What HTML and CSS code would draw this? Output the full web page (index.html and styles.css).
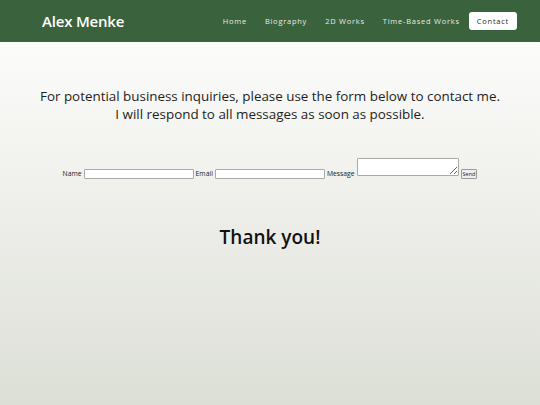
FILE: index.html
```html
<!DOCTYPE html>
<html lang="en">
<head>
<meta charset="utf-8">
<title>Contact - Alex Menke</title>
<link rel="stylesheet" href="styles.css">
</head>
<body>
<header class="site-header">
  <div class="logo">Alex Menke</div>
  <nav class="nav">
    <a class="nav-link" href="#">Home</a>
    <a class="nav-link" href="#">Biography</a>
    <a class="nav-link" href="#">2D Works</a>
    <a class="nav-link" href="#">Time-Based Works</a>
    <a class="nav-link nav-active" href="#">Contact</a>
  </nav>
</header>
<main class="content">
  <p class="intro">For potential business inquiries, please use the form below to contact me.<br>I will respond to all messages as soon as possible.</p>
  <form class="contact-form">
    <label class="lbl">Name</label><input class="field" type="text">
    <label class="lbl">Email</label><input class="field" type="text">
    <label class="lbl">Message</label><textarea class="msg"></textarea>
    <button class="send" type="button">Send</button>
  </form>
  <h1 class="thanks">Thank you!</h1>
</main>
</body>
</html>
```
FILE: styles.css
```css
html, body {
  margin: 0;
  padding: 0;
  height: 100%;
}
body {
  font-family: "Open Sans", "Liberation Sans", sans-serif;
  color: #1c1c1c;
  background: linear-gradient(to bottom, #ffffff 0px, #f3f3f0 150px, #dcdfd6 405px);
  min-height: 405px;
}
.site-header {
  height: 42px;
  background: #3a633d;
  display: flex;
  align-items: center;
  justify-content: space-between;
  padding: 0 23px 0 42px;
}
.logo {
  color: #ffffff;
  font-size: 15px;
  font-weight: 600;
  letter-spacing: -0.2px;
}
.nav {
  display: flex;
  align-items: center;
  gap: 0;
}
.nav-link {
  color: #e6ebe4;
  text-decoration: none;
  font-size: 7.5px;
  font-weight: 500;
  letter-spacing: 0.75px;
  padding: 5px 9px;
}
.nav-active {
  background: #ffffff;
  color: #2a2a2a;
  border-radius: 3px;
  margin-left: 0;
  padding: 4px 8px;
}
.content {
  text-align: center;
}
.intro {
  margin: 0;
  padding-top: 45px;
  font-size: 13.4px;
  line-height: 18px;
  color: #1e1e1e;
}
.contact-form {
  margin-top: 35px;
  display: flex;
  justify-content: center;
  align-items: flex-end;
  font-size: 6.8px;
  color: #1a1a1a;
}
.lbl {
  font-size: 6.8px;
  margin: 0 1px 0 0;
  line-height: 10px;
  color: #1a1a1a;
}
.field {
  width: 108px;
  height: 8px;
  padding: 0;
  margin: 0 2px 0 1px;
  border: 1px solid #a9a9a9;
  border-radius: 1px;
  background: #fff;
}
.msg {
  width: 100px;
  height: 16px;
  padding: 0;
  margin: 0 2px 3px 1px;
  border: 1px solid #a9a9a9;
  border-radius: 1px;
  resize: both;
  background: #fff;
}
.send {
  font-family: "Open Sans", "Liberation Sans", sans-serif;
  font-size: 5.5px;
  padding: 0 1px;
  height: 10px;
  border: 1px solid #9a9a9a;
  border-radius: 1px;
  background: #efefef;
  color: #1a1a1a;
}
.thanks {
  margin: 45px 0 0;
  font-size: 19px;
  font-weight: 600;
  color: #111;
}
```
